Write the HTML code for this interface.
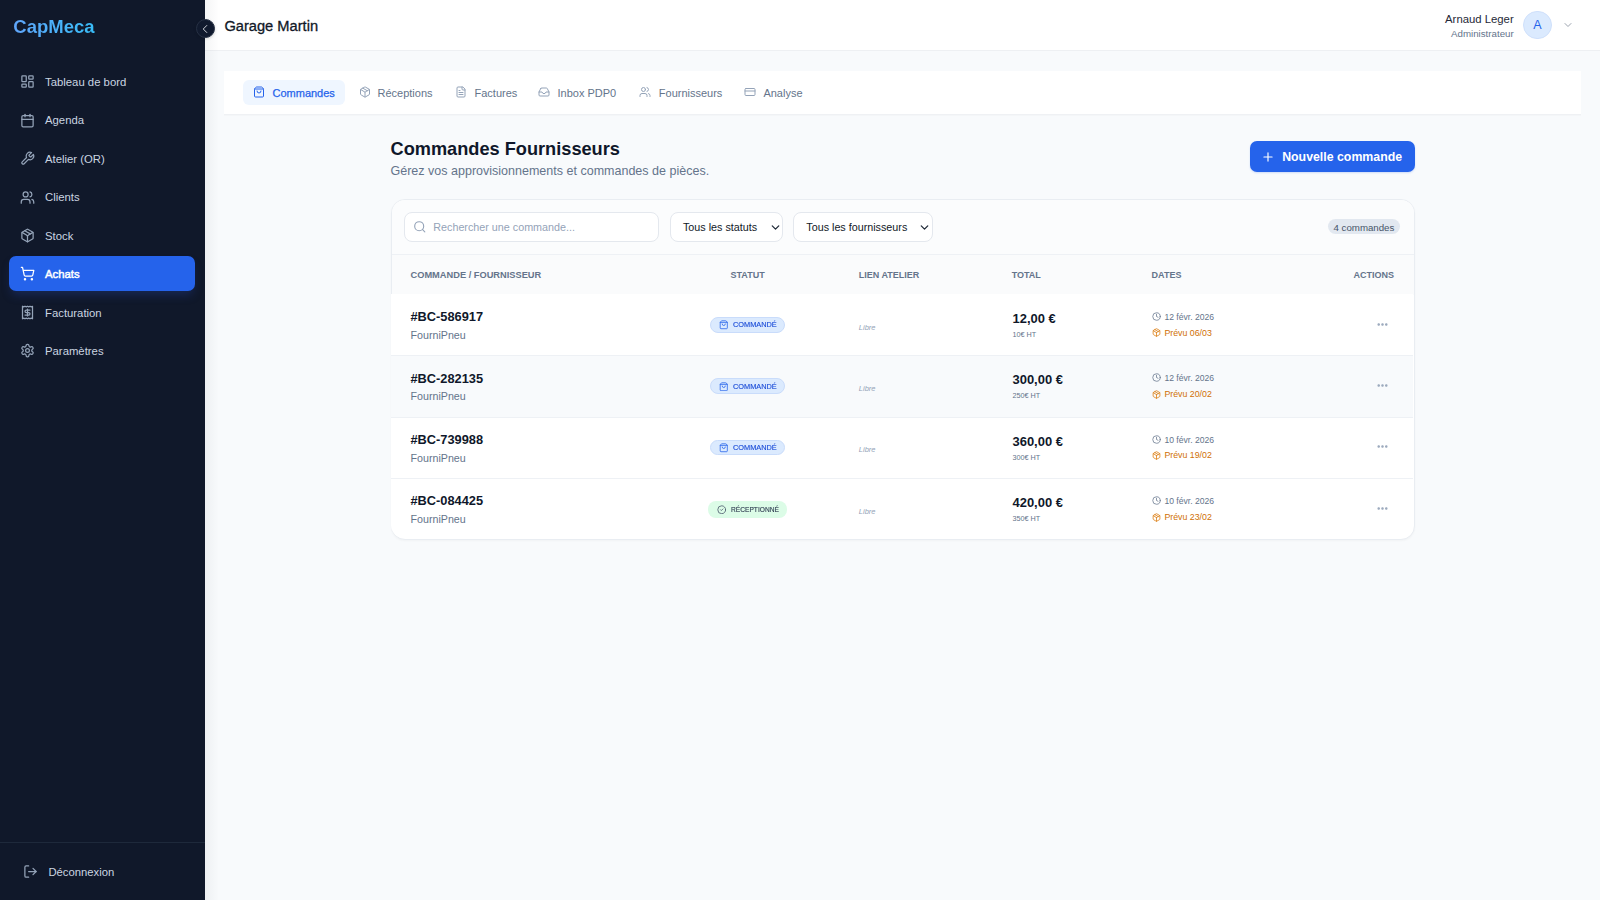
<!DOCTYPE html>
<html lang="fr">
<head>
<meta charset="utf-8">
<title>CapMeca - Achats</title>
<style>
*{box-sizing:border-box;margin:0;padding:0}
html,body{width:1600px;height:900px;overflow:hidden}
body{font-family:"Liberation Sans",sans-serif;background:#f8fafc;color:#0f172a;position:relative}
svg{display:block;position:absolute;fill:none;stroke:currentColor;stroke-width:2;stroke-linecap:round;stroke-linejoin:round}
.t{position:absolute;line-height:1;white-space:nowrap}
.b{font-weight:700}
.sb{position:absolute;left:0;top:0;width:205px;height:900px;background:#10182a}
.sbsh{position:absolute;left:205px;top:0;width:14px;height:900px;background:linear-gradient(90deg,rgba(15,23,42,.045),rgba(15,23,42,0))}
.logo{left:13.3px;top:18px;font-size:18.5px;font-weight:700;background:linear-gradient(90deg,#60a5fa,#38bdf8);-webkit-background-clip:text;background-clip:text;color:transparent}
.nav{position:absolute;left:9px;width:186px;height:35px;border-radius:7px}
.nav.act{background:#2563eb;box-shadow:0 6px 10px -2px rgba(30,58,138,.45)}
.navt{left:45px;font-size:11.33px;color:#cbd5e1}
.navi{left:20px;width:15px;height:15px;color:#94a3b8}
.sbfoot{position:absolute;left:0;top:842px;width:205px;height:1px;background:#1e293b}
.hdr{position:absolute;left:205px;top:0;width:1395px;height:51px;background:#fff;border-bottom:1px solid #eef0f3}
.collapse{position:absolute;left:195.5px;top:19.2px;width:19px;height:19px;border-radius:50%;background:#111a2e;border:1px solid #263044;z-index:5;color:#d1d5db;box-shadow:0 1px 3px rgba(0,0,0,.15)}
.tabs{position:absolute;left:224px;top:70.5px;width:1356.5px;height:43.5px;background:#fff;box-shadow:0 1.5px 0 #eff1f4}
.tab-act{position:absolute;left:243px;top:80px;width:102px;height:25px;background:#eff6ff;border-radius:6px}
.tabt{top:87.6px;font-size:11px;color:#64748b}
.tabi{top:86px;width:12px;height:12px;color:#94a3b8}
.card{position:absolute;left:390.5px;top:198.5px;width:1024px;height:341px;border:1px solid #e9edf2;border-radius:14px;background:#fff;overflow:hidden;box-shadow:0 1px 2px rgba(15,23,42,.03)}
.tool{position:absolute;left:0;top:0;width:100%;height:55px;background:#fbfcfd;border-bottom:1px solid #eef1f5}
.thead{position:absolute;left:0;top:55px;width:100%;height:40px;background:#fafbfc}
.inp{position:absolute;height:29.5px;top:212px;background:#fff;border:1px solid #e4e8ee;border-radius:8px}
.ht{top:270.7px;font-size:9px;font-weight:700;color:#64748b}
.row{position:absolute;left:391px;width:1022px;height:61.5px;border-top:1px solid #eef1f5}
.pill{position:absolute;left:710px;width:75px;height:15.5px;border-radius:8px;background:#dbeafe;border:1px solid #c9dcfb}
</style>
</head>
<body>
<!-- SIDEBAR -->
<div class="sb">
  <div class="t logo">CapMeca</div>
  <div class="nav act" style="top:256px"></div>
  <svg class="navi" style="top:74px" viewBox="0 0 24 24"><rect width="7" height="9" x="3" y="3" rx="1"/><rect width="7" height="5" x="14" y="3" rx="1"/><rect width="7" height="9" x="14" y="12" rx="1"/><rect width="7" height="5" x="3" y="16" rx="1"/></svg>
  <div class="t navt" style="top:76.7px">Tableau de bord</div>
  <svg class="navi" style="top:113px" viewBox="0 0 24 24"><path d="M8 2v4"/><path d="M16 2v4"/><rect width="18" height="18" x="3" y="4" rx="2"/><path d="M3 10h18"/></svg>
  <div class="t navt" style="top:115.1px">Agenda</div>
  <svg class="navi" style="top:151px" viewBox="0 0 24 24"><path d="M14.7 6.3a1 1 0 0 0 0 1.4l1.6 1.6a1 1 0 0 0 1.4 0l3.77-3.77a6 6 0 0 1-7.94 7.94l-6.91 6.91a2.12 2.12 0 0 1-3-3l6.91-6.91a6 6 0 0 1 7.94-7.94l-3.76 3.76z"/></svg>
  <div class="t navt" style="top:153.5px">Atelier (OR)</div>
  <svg class="navi" style="top:189.5px" viewBox="0 0 24 24"><path d="M16 21v-2a4 4 0 0 0-4-4H6a4 4 0 0 0-4 4v2"/><circle cx="9" cy="7" r="4"/><path d="M22 21v-2a4 4 0 0 0-3-3.87"/><path d="M16 3.13a4 4 0 0 1 0 7.75"/></svg>
  <div class="t navt" style="top:191.8px">Clients</div>
  <svg class="navi" style="top:228px" viewBox="0 0 24 24"><path d="M11 21.73a2 2 0 0 0 2 0l7-4A2 2 0 0 0 21 16V8a2 2 0 0 0-1-1.73l-7-4a2 2 0 0 0-2 0l-7 4A2 2 0 0 0 3 8v8a2 2 0 0 0 1 1.73z"/><path d="M12 22V12"/><path d="m3.3 7 7.703 4.734a2 2 0 0 0 1.994 0L20.7 7"/><path d="m7.5 4.27 9 5.15"/></svg>
  <div class="t navt" style="top:231.2px">Stock</div>
  <svg class="navi" style="top:266px;color:#fff" viewBox="0 0 24 24"><circle cx="8" cy="21" r="1"/><circle cx="19" cy="21" r="1"/><path d="M2.05 2.05h2l2.66 12.42a2 2 0 0 0 2 1.58h9.78a2 2 0 0 0 1.95-1.57l1.65-7.43H5.12"/></svg>
  <div class="t navt" style="top:268.6px;color:#fff;-webkit-text-stroke:0.45px #fff">Achats</div>
  <svg class="navi" style="top:305px" viewBox="0 0 24 24"><path d="M4 2v20l2-1 2 1 2-1 2 1 2-1 2 1 2-1 2 1V2l-2 1-2-1-2 1-2-1-2 1-2-1-2 1Z"/><path d="M16 8h-6a2 2 0 1 0 0 4h4a2 2 0 1 1 0 4H8"/><path d="M12 17.5v-11"/></svg>
  <div class="t navt" style="top:307.8px">Facturation</div>
  <svg class="navi" style="top:343px" viewBox="0 0 24 24"><path d="M12.22 2h-.44a2 2 0 0 0-2 2v.18a2 2 0 0 1-1 1.73l-.43.25a2 2 0 0 1-2 0l-.15-.08a2 2 0 0 0-2.73.73l-.22.38a2 2 0 0 0 .73 2.73l.15.1a2 2 0 0 1 1 1.72v.51a2 2 0 0 1-1 1.74l-.15.09a2 2 0 0 0-.73 2.73l.22.38a2 2 0 0 0 2.73.73l.15-.08a2 2 0 0 1 2 0l.43.25a2 2 0 0 1 1 1.73V20a2 2 0 0 0 2 2h.44a2 2 0 0 0 2-2v-.18a2 2 0 0 1 1-1.73l.43-.25a2 2 0 0 1 2 0l.15.08a2 2 0 0 0 2.73-.73l.22-.39a2 2 0 0 0-.73-2.73l-.15-.08a2 2 0 0 1-1-1.74v-.5a2 2 0 0 1 1-1.74l.15-.09a2 2 0 0 0 .73-2.73l-.22-.38a2 2 0 0 0-2.73-.73l-.15.08a2 2 0 0 1-2 0l-.43-.25a2 2 0 0 1-1-1.73V4a2 2 0 0 0-2-2z"/><circle cx="12" cy="12" r="3"/></svg>
  <div class="t navt" style="top:346.2px">Paramètres</div>
  <div class="sbfoot"></div>
  <svg class="navi" style="top:864px;left:23px" viewBox="0 0 24 24"><path d="M9 21H5a2 2 0 0 1-2-2V5a2 2 0 0 1 2-2h4"/><polyline points="16 17 21 12 16 7"/><line x1="21" x2="9" y1="12" y2="12"/></svg>
  <div class="t navt" style="top:866.7px;left:48.4px;font-size:11.3px">Déconnexion</div>
</div>

<!-- HEADER -->
<div class="hdr"></div>
<div class="sbsh"></div>
<div class="collapse"><svg style="left:1.5px;top:2px;width:14px;height:14px;stroke-width:1.7" viewBox="0 0 24 24"><path d="m15 18-6-6 6-6"/></svg></div>
<div class="t" style="left:224.4px;top:19.2px;font-size:14.66px;color:#111827;-webkit-text-stroke:0.3px #111827">Garage Martin</div>
<div class="t" style="right:86.3px;top:13.5px;font-size:11.34px;color:#1f2937">Arnaud Leger</div>
<div class="t" style="right:86.3px;top:28.7px;font-size:9.73px;color:#64748b">Administrateur</div>
<div style="position:absolute;left:1523px;top:10.6px;width:28.5px;height:28.5px;border-radius:50%;background:#dbeafe;border:1px solid #cfe0fb"></div>
<div class="t" style="left:1533.2px;top:19.4px;font-size:12.5px;color:#2563eb">A</div>
<svg style="left:1561.5px;top:19px;width:12px;height:12px;color:#9ca3af;stroke-width:2" viewBox="0 0 24 24"><path d="m6 9 6 6 6-6"/></svg>

<!-- TABS -->
<div class="tabs"></div>
<div class="tab-act"></div>
<svg class="tabi" style="left:253px;color:#2563eb" viewBox="0 0 24 24"><path d="M16 10a4 4 0 0 1-8 0"/><path d="M3.103 6.034h17.794"/><path d="M3.4 5.467a2 2 0 0 0-.4 1.2V20a2 2 0 0 0 2 2h14a2 2 0 0 0 2-2V6.667a2 2 0 0 0-.4-1.2l-2-2.667A2 2 0 0 0 17 2H7a2 2 0 0 0-1.6.8z"/></svg>
<div class="t tabt" style="left:272.5px;color:#2563eb;-webkit-text-stroke:0.25px #2563eb">Commandes</div>
<svg class="tabi" style="left:358.5px" viewBox="0 0 24 24"><path d="M11 21.73a2 2 0 0 0 2 0l7-4A2 2 0 0 0 21 16V8a2 2 0 0 0-1-1.73l-7-4a2 2 0 0 0-2 0l-7 4A2 2 0 0 0 3 8v8a2 2 0 0 0 1 1.73z"/><path d="M12 22V12"/><path d="m3.3 7 7.703 4.734a2 2 0 0 0 1.994 0L20.7 7"/><path d="m7.5 4.27 9 5.15"/></svg>
<div class="t tabt" style="left:377.5px">Réceptions</div>
<svg class="tabi" style="left:455px" viewBox="0 0 24 24"><path d="M15 2H6a2 2 0 0 0-2 2v16a2 2 0 0 0 2 2h12a2 2 0 0 0 2-2V7Z"/><path d="M14 2v4a2 2 0 0 0 2 2h4"/><path d="M10 9H8"/><path d="M16 13H8"/><path d="M16 17H8"/></svg>
<div class="t tabt" style="left:474.5px">Factures</div>
<svg class="tabi" style="left:538px" viewBox="0 0 24 24"><polyline points="22 12 16 12 14 15 10 15 8 12 2 12"/><path d="M5.45 5.11 2 12v6a2 2 0 0 0 2 2h16a2 2 0 0 0 2-2v-6l-3.45-6.89A2 2 0 0 0 16.76 4H7.24a2 2 0 0 0-1.79 1.11z"/></svg>
<div class="t tabt" style="left:557.5px">Inbox PDP0</div>
<svg class="tabi" style="left:639px" viewBox="0 0 24 24"><path d="M16 21v-2a4 4 0 0 0-4-4H6a4 4 0 0 0-4 4v2"/><circle cx="9" cy="7" r="4"/><path d="M22 21v-2a4 4 0 0 0-3-3.87"/><path d="M16 3.13a4 4 0 0 1 0 7.75"/></svg>
<div class="t tabt" style="left:658.8px">Fournisseurs</div>
<svg class="tabi" style="left:744px" viewBox="0 0 24 24"><rect width="20" height="14" x="2" y="5" rx="2"/><line x1="2" x2="22" y1="10" y2="10"/></svg>
<div class="t tabt" style="left:763.4px">Analyse</div>

<!-- TITLE -->
<div class="t b" style="left:390.5px;top:139.6px;font-size:18.2px;color:#0f172a">Commandes Fournisseurs</div>
<div class="t" style="left:390.5px;top:165.2px;font-size:12.53px;color:#64748b">Gérez vos approvisionnements et commandes de pièces.</div>
<div style="position:absolute;left:1249.5px;top:140.6px;width:165.5px;height:31.7px;border-radius:7px;background:#2563eb;box-shadow:0 1px 2px rgba(37,99,235,.2)"></div>
<svg style="left:1261.4px;top:150.2px;width:14px;height:14px;color:#fff;stroke-width:2" viewBox="0 0 24 24"><path d="M5 12h14"/><path d="M12 5v14"/></svg>
<div class="t b" style="left:1282.2px;top:151.4px;font-size:12.33px;color:#fff">Nouvelle commande</div>

<!-- CARD -->
<div class="card">
  <div class="tool"></div>
  <div class="thead"></div>
</div>
<div class="inp" style="left:404.3px;width:255.2px"></div>
<svg style="left:412.5px;top:219.8px;width:13.5px;height:13.5px;color:#94a3b8" viewBox="0 0 24 24"><circle cx="11" cy="11" r="8"/><path d="m21 21-4.3-4.3"/></svg>
<div class="t" style="left:433.3px;top:222.1px;font-size:10.76px;color:#94a3b8">Rechercher une commande...</div>
<div class="inp" style="left:669.5px;width:113.5px"></div>
<div class="t" style="left:683px;top:222.1px;font-size:10.76px;color:#111827">Tous les statuts</div>
<svg style="left:768.5px;top:220.5px;width:13px;height:13px;color:#1f2937;stroke-width:2.3" viewBox="0 0 24 24"><path d="m6 9 6 6 6-6"/></svg>
<div class="inp" style="left:793px;width:140px"></div>
<div class="t" style="left:806.3px;top:222.1px;font-size:10.76px;color:#111827">Tous les fournisseurs</div>
<svg style="left:918px;top:220.5px;width:13px;height:13px;color:#1f2937;stroke-width:2.3" viewBox="0 0 24 24"><path d="m6 9 6 6 6-6"/></svg>
<div style="position:absolute;left:1327.5px;top:219.2px;width:72.7px;height:15px;border-radius:8px;background:#e2e8f0"></div>
<div class="t" style="left:1333.5px;top:222.6px;font-size:9.7px;color:#475569">4 commandes</div>

<div class="t ht" style="left:410.5px;font-size:9.27px">COMMANDE / FOURNISSEUR</div>
<div class="t ht" style="left:730.5px">STATUT</div>
<div class="t ht" style="left:858.8px">LIEN ATELIER</div>
<div class="t ht" style="left:1011.7px">TOTAL</div>
<div class="t ht" style="left:1151.6px">DATES</div>
<div class="t ht" style="left:1353.4px">ACTIONS</div>

<!-- ROWS -->
<div id="rows">
<div class="row" style="top:293.7px;background:#fff;border-top:0"></div>
<div class="t b" style="left:410.5px;top:311.2px;font-size:12.8px;color:#0f172a">#BC-586917</div>
<div class="t" style="left:410.5px;top:329.7px;font-size:10.7px;color:#64748b">FourniPneu</div>
<div class="pill" style="top:317.0px"></div>
<svg style="left:718.8px;top:320.2px;width:9.5px;height:9.5px;color:#2563eb" viewBox="0 0 24 24"><path d="M16 10a4 4 0 0 1-8 0"/><path d="M3.103 6.034h17.794"/><path d="M3.4 5.467a2 2 0 0 0-.4 1.2V20a2 2 0 0 0 2 2h14a2 2 0 0 0 2-2V6.667a2 2 0 0 0-.4-1.2l-2-2.667A2 2 0 0 0 17 2H7a2 2 0 0 0-1.6.8z"/></svg>
<div class="t" style="left:733.1px;top:321.2px;font-size:7.8px;color:#1d4ed8;transform:scaleX(0.944);transform-origin:0 0;-webkit-text-stroke:0.15px #1d4ed8">COMMANDÉ</div>
<div class="t" style="left:858.8px;top:323.6px;font-size:7.5px;font-style:italic;color:#94a3b8">Libre</div>
<div class="t b" style="left:1012.5px;top:312.8px;font-size:12.95px;color:#0f172a">12,00 €</div>
<div class="t" style="left:1012.5px;top:330.9px;font-size:7.24px;color:#64748b">10€ HT</div>
<svg style="left:1151.6px;top:312.0px;width:9px;height:9px;color:#64748b" viewBox="0 0 24 24"><circle cx="12" cy="12" r="10"/><polyline points="12 6 12 12 16 14"/></svg>
<div class="t" style="left:1164.4px;top:312.7px;font-size:8.6px;color:#64748b">12 févr. 2026</div>
<svg style="left:1151.6px;top:328.4px;width:9px;height:9px;color:#d97706" viewBox="0 0 24 24"><path d="M11 21.73a2 2 0 0 0 2 0l7-4A2 2 0 0 0 21 16V8a2 2 0 0 0-1-1.73l-7-4a2 2 0 0 0-2 0l-7 4A2 2 0 0 0 3 8v8a2 2 0 0 0 1 1.73z"/><path d="M12 22V12"/><path d="m3.3 7 7.703 4.734a2 2 0 0 0 1.994 0L20.7 7"/><path d="m7.5 4.27 9 5.15"/></svg>
<div class="t" style="left:1164.4px;top:328.6px;font-size:8.8px;color:#d07005">Prévu 06/03</div>
<svg style="left:1375.5px;top:317.5px;width:13px;height:13px;color:#94a3b8;stroke-width:2.6" viewBox="0 0 24 24"><circle cx="12" cy="12" r="1"/><circle cx="19" cy="12" r="1"/><circle cx="5" cy="12" r="1"/></svg>
<div class="row" style="top:355.1px;background:#f8fafc;border-top:1px solid #eef1f5"></div>
<div class="t b" style="left:410.5px;top:372.6px;font-size:12.8px;color:#0f172a">#BC-282135</div>
<div class="t" style="left:410.5px;top:391.1px;font-size:10.7px;color:#64748b">FourniPneu</div>
<div class="pill" style="top:378.4px"></div>
<svg style="left:718.8px;top:381.6px;width:9.5px;height:9.5px;color:#2563eb" viewBox="0 0 24 24"><path d="M16 10a4 4 0 0 1-8 0"/><path d="M3.103 6.034h17.794"/><path d="M3.4 5.467a2 2 0 0 0-.4 1.2V20a2 2 0 0 0 2 2h14a2 2 0 0 0 2-2V6.667a2 2 0 0 0-.4-1.2l-2-2.667A2 2 0 0 0 17 2H7a2 2 0 0 0-1.6.8z"/></svg>
<div class="t" style="left:733.1px;top:382.6px;font-size:7.8px;color:#1d4ed8;transform:scaleX(0.944);transform-origin:0 0;-webkit-text-stroke:0.15px #1d4ed8">COMMANDÉ</div>
<div class="t" style="left:858.8px;top:385.0px;font-size:7.5px;font-style:italic;color:#94a3b8">Libre</div>
<div class="t b" style="left:1012.5px;top:374.2px;font-size:12.95px;color:#0f172a">300,00 €</div>
<div class="t" style="left:1012.5px;top:392.3px;font-size:7.24px;color:#64748b">250€ HT</div>
<svg style="left:1151.6px;top:373.4px;width:9px;height:9px;color:#64748b" viewBox="0 0 24 24"><circle cx="12" cy="12" r="10"/><polyline points="12 6 12 12 16 14"/></svg>
<div class="t" style="left:1164.4px;top:374.1px;font-size:8.6px;color:#64748b">12 févr. 2026</div>
<svg style="left:1151.6px;top:389.8px;width:9px;height:9px;color:#d97706" viewBox="0 0 24 24"><path d="M11 21.73a2 2 0 0 0 2 0l7-4A2 2 0 0 0 21 16V8a2 2 0 0 0-1-1.73l-7-4a2 2 0 0 0-2 0l-7 4A2 2 0 0 0 3 8v8a2 2 0 0 0 1 1.73z"/><path d="M12 22V12"/><path d="m3.3 7 7.703 4.734a2 2 0 0 0 1.994 0L20.7 7"/><path d="m7.5 4.27 9 5.15"/></svg>
<div class="t" style="left:1164.4px;top:390.0px;font-size:8.8px;color:#d07005">Prévu 20/02</div>
<svg style="left:1375.5px;top:378.9px;width:13px;height:13px;color:#94a3b8;stroke-width:2.6" viewBox="0 0 24 24"><circle cx="12" cy="12" r="1"/><circle cx="19" cy="12" r="1"/><circle cx="5" cy="12" r="1"/></svg>
<div class="row" style="top:416.5px;background:#fff;border-top:1px solid #eef1f5"></div>
<div class="t b" style="left:410.5px;top:434.0px;font-size:12.8px;color:#0f172a">#BC-739988</div>
<div class="t" style="left:410.5px;top:452.5px;font-size:10.7px;color:#64748b">FourniPneu</div>
<div class="pill" style="top:439.8px"></div>
<svg style="left:718.8px;top:443.0px;width:9.5px;height:9.5px;color:#2563eb" viewBox="0 0 24 24"><path d="M16 10a4 4 0 0 1-8 0"/><path d="M3.103 6.034h17.794"/><path d="M3.4 5.467a2 2 0 0 0-.4 1.2V20a2 2 0 0 0 2 2h14a2 2 0 0 0 2-2V6.667a2 2 0 0 0-.4-1.2l-2-2.667A2 2 0 0 0 17 2H7a2 2 0 0 0-1.6.8z"/></svg>
<div class="t" style="left:733.1px;top:444.0px;font-size:7.8px;color:#1d4ed8;transform:scaleX(0.944);transform-origin:0 0;-webkit-text-stroke:0.15px #1d4ed8">COMMANDÉ</div>
<div class="t" style="left:858.8px;top:446.4px;font-size:7.5px;font-style:italic;color:#94a3b8">Libre</div>
<div class="t b" style="left:1012.5px;top:435.6px;font-size:12.95px;color:#0f172a">360,00 €</div>
<div class="t" style="left:1012.5px;top:453.7px;font-size:7.24px;color:#64748b">300€ HT</div>
<svg style="left:1151.6px;top:434.8px;width:9px;height:9px;color:#64748b" viewBox="0 0 24 24"><circle cx="12" cy="12" r="10"/><polyline points="12 6 12 12 16 14"/></svg>
<div class="t" style="left:1164.4px;top:435.5px;font-size:8.6px;color:#64748b">10 févr. 2026</div>
<svg style="left:1151.6px;top:451.2px;width:9px;height:9px;color:#d97706" viewBox="0 0 24 24"><path d="M11 21.73a2 2 0 0 0 2 0l7-4A2 2 0 0 0 21 16V8a2 2 0 0 0-1-1.73l-7-4a2 2 0 0 0-2 0l-7 4A2 2 0 0 0 3 8v8a2 2 0 0 0 1 1.73z"/><path d="M12 22V12"/><path d="m3.3 7 7.703 4.734a2 2 0 0 0 1.994 0L20.7 7"/><path d="m7.5 4.27 9 5.15"/></svg>
<div class="t" style="left:1164.4px;top:451.4px;font-size:8.8px;color:#d07005">Prévu 19/02</div>
<svg style="left:1375.5px;top:440.3px;width:13px;height:13px;color:#94a3b8;stroke-width:2.6" viewBox="0 0 24 24"><circle cx="12" cy="12" r="1"/><circle cx="19" cy="12" r="1"/><circle cx="5" cy="12" r="1"/></svg>
<div class="row" style="top:477.9px;background:#fff;border-top:1px solid #eef1f5;border-radius:0 0 13px 13px;height:60.5px"></div>
<div class="t b" style="left:410.5px;top:495.4px;font-size:12.8px;color:#0f172a">#BC-084425</div>
<div class="t" style="left:410.5px;top:513.9px;font-size:10.7px;color:#64748b">FourniPneu</div>
<div class="pill" style="top:501.2px;left:708.1px;width:79.3px;height:17.2px;background:#dcfce7;border:0"></div>
<svg style="left:716.8px;top:504.5px;width:9.5px;height:9.5px;color:#475569" viewBox="0 0 24 24"><circle cx="12" cy="12" r="10"/><path d="m9 12 2 2 4-4"/></svg>
<div class="t" style="left:731.2px;top:506.4px;font-size:7.8px;color:#334155;transform:scaleX(0.85);transform-origin:0 0;-webkit-text-stroke:0.15px #334155">RÉCEPTIONNÉ</div>
<div class="t" style="left:858.8px;top:507.8px;font-size:7.5px;font-style:italic;color:#94a3b8">Libre</div>
<div class="t b" style="left:1012.5px;top:497.0px;font-size:12.95px;color:#0f172a">420,00 €</div>
<div class="t" style="left:1012.5px;top:515.1px;font-size:7.24px;color:#64748b">350€ HT</div>
<svg style="left:1151.6px;top:496.2px;width:9px;height:9px;color:#64748b" viewBox="0 0 24 24"><circle cx="12" cy="12" r="10"/><polyline points="12 6 12 12 16 14"/></svg>
<div class="t" style="left:1164.4px;top:496.9px;font-size:8.6px;color:#64748b">10 févr. 2026</div>
<svg style="left:1151.6px;top:512.6px;width:9px;height:9px;color:#d97706" viewBox="0 0 24 24"><path d="M11 21.73a2 2 0 0 0 2 0l7-4A2 2 0 0 0 21 16V8a2 2 0 0 0-1-1.73l-7-4a2 2 0 0 0-2 0l-7 4A2 2 0 0 0 3 8v8a2 2 0 0 0 1 1.73z"/><path d="M12 22V12"/><path d="m3.3 7 7.703 4.734a2 2 0 0 0 1.994 0L20.7 7"/><path d="m7.5 4.27 9 5.15"/></svg>
<div class="t" style="left:1164.4px;top:512.8px;font-size:8.8px;color:#d07005">Prévu 23/02</div>
<svg style="left:1375.5px;top:501.7px;width:13px;height:13px;color:#94a3b8;stroke-width:2.6" viewBox="0 0 24 24"><circle cx="12" cy="12" r="1"/><circle cx="19" cy="12" r="1"/><circle cx="5" cy="12" r="1"/></svg>
</div>
</body>
</html>
